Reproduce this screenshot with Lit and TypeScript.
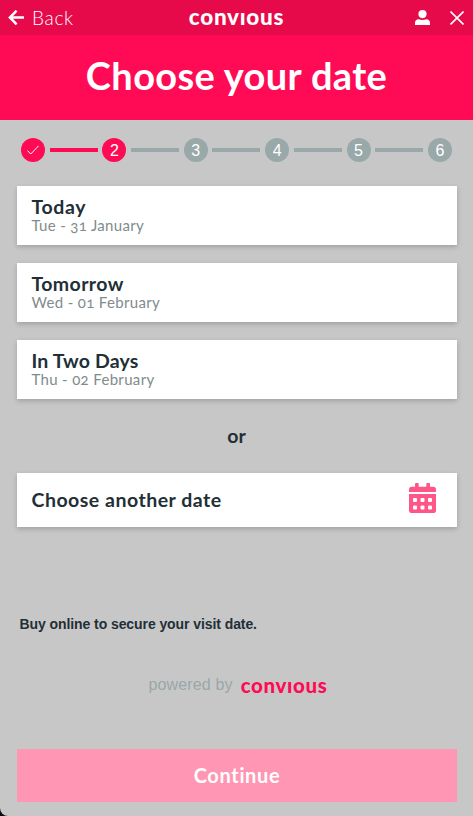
import { LitElement, html, css, svg } from "lit";
import { customElement } from "lit/decorators.js";
import { classMap } from "lit/directives/class-map.js";

const DAYS = [
  { id: "today", title: "Today", date: "Tue - 31 January" },
  { id: "tomorrow", title: "Tomorrow", date: "Wed - 01 February" },
  { id: "two", title: "In Two Days", date: "Thu - 02 February" },
];
const CURRENT = 2;

@customElement("app-root")
export class AppRoot extends LitElement {
  static styles = css`
    :host {
      display: block;
      height: 816px;
      background: #050a14;
      font-family: Lato, "Open Sans", sans-serif;
      color: #222f36;
    }
    * { box-sizing: border-box; }
    .panel {
      height: 816px;
      background: #c7c7c7;
      border-radius: 0 0 0 8px;
      overflow: hidden;
      display: flex;
      flex-direction: column;
      white-space: nowrap;
    }
    .bar {
      height: 35px;
      flex: none;
      background: #e60a4b;
      color: #fff;
      display: grid;
      grid-template-columns: 1fr auto 1fr;
      align-items: center;
    }
    .back {
      display: flex;
      align-items: center;
      padding-left: 8px;
      gap: 8px;
      font-size: 19px;
      font-weight: 300;
      letter-spacing: 0.7px;
      line-height: 35px;
    }
    .bk { height: 35px; }
    .tools { display: flex; justify-content: flex-end; align-items: center; gap: 20px; padding-right: 9.5px; }
    svg { display: block; flex: none; }
    .logo { font-family: Lato, sans-serif; font-weight: 900; font-size: 22.5px; line-height: 31px; letter-spacing: 0.7px; height: 34px; }
    .hero {
      height: 85px;
      flex: none;
      margin: 0;
      background: #ff0a54;
      color: #fff;
      text-align: center;
      font-weight: 700;
      font-size: 38px;
      letter-spacing: 0.35px;
      line-height: 80px;
    }
    .steps { display: flex; justify-content: space-between; align-items: center; padding: 0 21px; margin-top: 18px; height: 24px; flex: none; }
    .dot {
      width: 24px; height: 24px; border-radius: 50%;
      background: #99a8a9; color: #fff;
      font: 16px/25px "Liberation Sans", Arial, sans-serif;
      text-align: center;
      display: flex; align-items: center; justify-content: center;
    }
    .line { width: 48px; height: 4px; background: #99a8a9; }
    .on { background: #ff0a54; }
    .list { display: flex; flex-direction: column; gap: 18px; padding: 0 16px 0 17px; margin-top: 24px; }
    .card { background: #fff; box-shadow: 0 2px 5px rgba(0, 0, 0, 0.2); height: 59px; padding: 9px 14.5px 0; }
    .name { font-weight: 700; font-size: 19.5px; line-height: 23px; }
    .n-today { letter-spacing: 0.6px; }
    .n-tomorrow { letter-spacing: 0.4px; }
    .n-two { letter-spacing: 0.18px; }
    .choose { letter-spacing: 0.5px; margin-bottom: 2px; }
    .date { font-size: 15px; line-height: 15px; color: #818b8d; font-variant-numeric: oldstyle-nums; letter-spacing: 0.33px; }
    .or { text-align: center; font-weight: 700; font-size: 19.5px; line-height: 74px; height: 74px; }
    .other { margin: 0 16px 0 17px; height: 54px; padding: 0 21.5px 0 14.5px; display: flex; align-items: center; justify-content: space-between; }
    .other svg { margin-bottom: 4px; }
    .note { margin: 87px 0 0 19.5px; font: 700 14px/20px "Liberation Sans", Arial, sans-serif; letter-spacing: -0.08px; }
    .powered { display: flex; justify-content: center; gap: 8px; padding-left: 3px; margin-top: 41px; align-items: flex-start; }
    .by { font: 16px/20px "Liberation Sans", Arial, sans-serif; letter-spacing: 0.15px; color: #99a8a9; }
    .powered .logo { color: #ff0a54; font-size: 20.5px; line-height: 20px; height: 20px; letter-spacing: 0.65px; }
    .go {
      margin: auto 16px 14px 17px; height: 53px; border: 0; padding: 0 0 1px;
      background: #ff96b4; color: #fff; font: 700 20px/52px Lato, sans-serif; letter-spacing: 0.65px;
    }
  `;

  private step(n: number) {
    const on = n <= CURRENT;
    return html`
      ${n > 1 ? html`<div class=${classMap({ line: true, on })}></div>` : ""}
      <div class=${classMap({ dot: true, on })}>
        ${n < CURRENT
          ? html`<svg width="12" height="10" viewBox="0 0 12 10" fill="none" stroke="#fff" stroke-width="1"><path d="M.4 5.6 3.8 9 11.6.8" /></svg>`
          : n}
      </div>`;
  }

  render() {
    return html`
      <div class="panel">
        <header class="bar">
          <div class="back">
            <svg width="16" height="16" viewBox="0 0 16 16" fill="none" stroke="#fff" stroke-width="2.5"><path d="M8.600 .7 1.900 7.500l6.700 6.800M2 7.500h14" /></svg>
            <span class="bk">Back</span>
          </div>
          <span class="logo">convıous</span>
          <div class="tools">
            <svg width="15" height="15" viewBox="0 0 15 15" fill="#fff"><circle cx="7.5" cy="4.1" r="4.1" /><path d="M0 15v-2.2C0 10.400 1.500 9.200 3.600 9.200Q7.500 10.600 11.400 9.200C13.500 9.200 15 10.400 15 12.800V15Z" /></svg>
            <svg width="14" height="14" viewBox="0 0 14 14" stroke="#fff" stroke-width="1.6"><path d="M.5.5l13 13M13.500.5l-13 13" /></svg>
          </div>
        </header>
        <h1 class="hero">Choose your date</h1>
        <div class="steps">${[1, 2, 3, 4, 5, 6].map((n) => this.step(n))}</div>
        <div class="list">
          ${DAYS.map(
            (d) => html`<div class="card">
              <div class="name"><span class="n-${d.id}">${d.title}</span></div>
              <div class="date">${d.date}</div>
            </div>`
          )}
        </div>
        <div class="or">or</div>
        <div class="card other">
          <span class="name choose">Choose another date</span>
          <svg width="27" height="30" viewBox="0 0 27 30">
            <g fill="#ff5588">
              <path d="M0 9V6.500Q0 3.700 2.800 3.700H6V1Q6 0 7 0H8.700Q9.700 0 9.700 1V3.700H17.300V1Q17.300 0 18.300 0H20Q21 0 21 1V3.700H24.200Q27 3.700 27 6.500V9Z" />
              <path d="M0 10.900H27V27.200Q27 30 24.200 30H2.800Q0 30 0 27.200Z" />
            </g>
            <g fill="#fff">
              ${[4, 11.5, 19].map((x) => [15, 22.5].map((y) => svg`<rect x=${x} y=${y} width="4" height="4" rx="1" />`))}
            </g>
          </svg>
        </div>
        <div class="note">Buy online to secure your visit date.</div>
        <div class="powered"><span class="by">powered by</span><span class="logo">convıous</span></div>
        <button class="go">Continue</button>
      </div>`;
  }
}
